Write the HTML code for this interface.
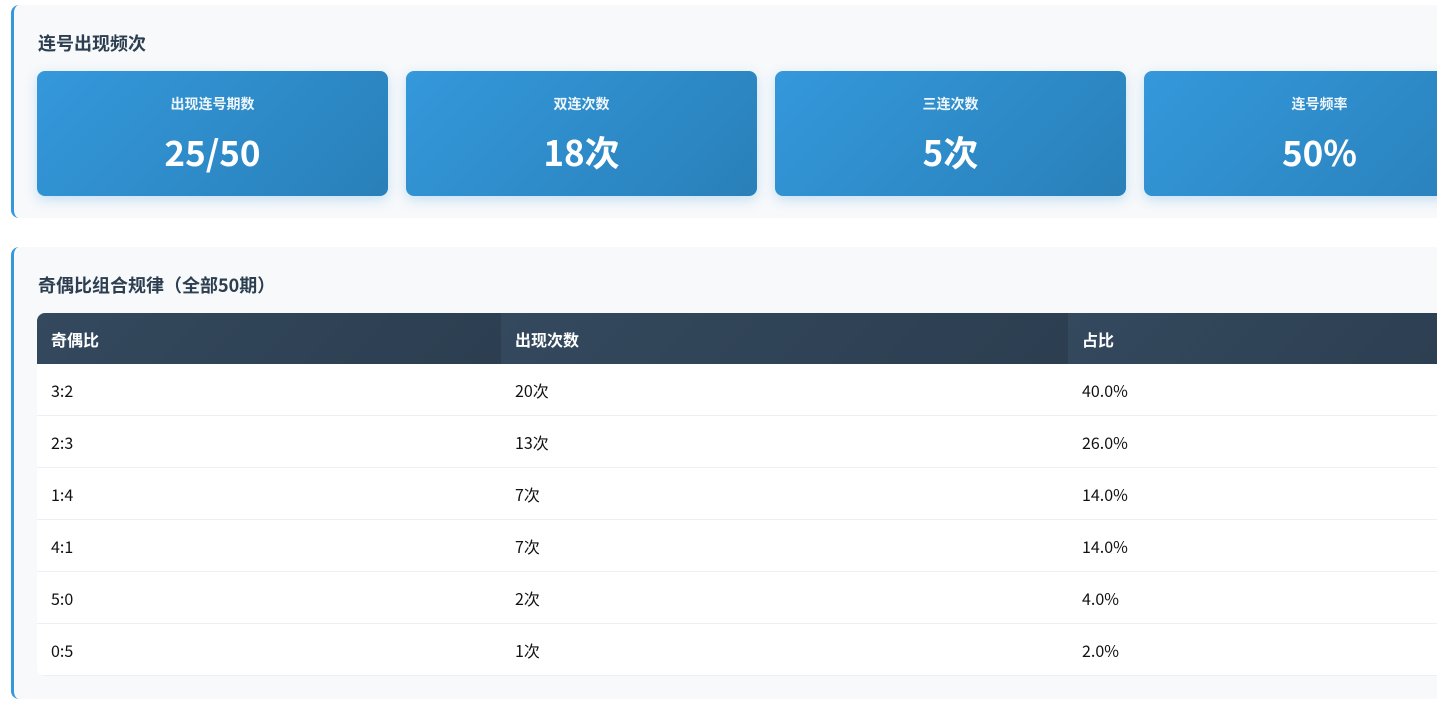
<!DOCTYPE html>
<html><head><meta charset="utf-8"><style>
html,body{margin:0;padding:0;width:1437px;height:712px;overflow:hidden;background:#fff;font-family:"Noto Sans CJK SC","Liberation Sans",sans-serif;}
.sec{position:absolute;left:11px;width:1480px;background:#f7f9fb;border-left:3px solid #3498db;border-radius:8px;box-sizing:border-box;}
.s1{top:5px;height:213px;}
.s2{top:247px;height:452px;}
h3{position:absolute;left:24px;margin:0;font-size:18px;line-height:26px;font-weight:bold;color:#2c3e50;}
.card{position:absolute;top:66px;width:351px;height:125px;border-radius:8px;background:linear-gradient(135deg,#3498db,#2980b9);box-shadow:0 4px 12px rgba(52,152,219,.25);color:#fff;text-align:center;}
.card .l{position:absolute;top:23px;width:100%;font-size:14px;line-height:20px;font-weight:bold;opacity:.92;}
.card .v{position:absolute;top:58px;width:100%;font-size:35px;font-weight:bold;line-height:46px;}
table{position:absolute;left:23px;top:66px;border-collapse:collapse;width:1460px;background:#fff;border-radius:8px 0 0 8px;overflow:hidden;}
th{height:51px;text-align:left;padding:0 0 0 14px;color:#fff;font-size:16px;font-weight:bold;background:linear-gradient(135deg,#34495e,#2c3e50);}
td{height:51px;padding:0 0 0 14px;font-size:16px;color:#111;border-bottom:1px solid #ecf0f1;}
</style></head><body>
<div class="sec s1">
<h3 style="top:25px">连号出现频次</h3>
<div class="card" style="left:23px"><div class="l">出现连号期数</div><div class="v">25/50</div></div>
<div class="card" style="left:392px"><div class="l">双连次数</div><div class="v">18次</div></div>
<div class="card" style="left:761px"><div class="l">三连次数</div><div class="v">5次</div></div>
<div class="card" style="left:1130px"><div class="l">连号频率</div><div class="v">50%</div></div>
</div>
<div class="sec s2">
<h3 style="top:25px">奇偶比组合规律（全部50期）</h3>
<table>
<tr><th style="width:450px">奇偶比</th><th style="width:553px">出现次数</th><th>占比</th></tr>
<tr><td>3:2</td><td>20次</td><td>40.0%</td></tr>
<tr><td>2:3</td><td>13次</td><td>26.0%</td></tr>
<tr><td>1:4</td><td>7次</td><td>14.0%</td></tr>
<tr><td>4:1</td><td>7次</td><td>14.0%</td></tr>
<tr><td>5:0</td><td>2次</td><td>4.0%</td></tr>
<tr><td>0:5</td><td>1次</td><td>2.0%</td></tr>
</table>
</div>
</body></html>
